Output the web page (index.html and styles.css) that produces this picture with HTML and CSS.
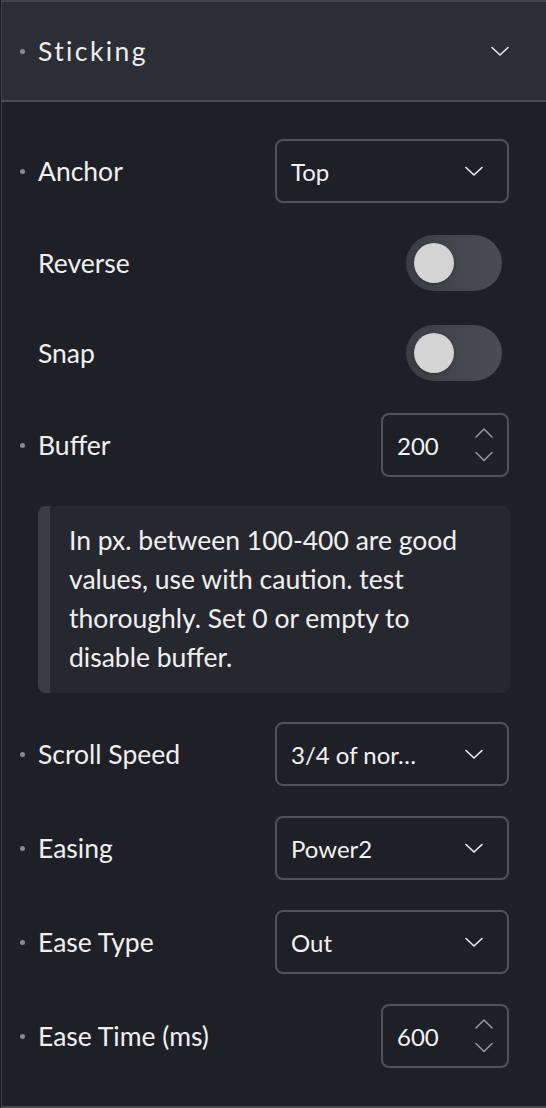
FILE: index.html
```html
<!DOCTYPE html>
<html>
<head>
<meta charset="utf-8">
<link rel="stylesheet" href="styles.css">
</head>
<body>
<div class="panel">
  <div class="header">
    <div class="label-wrap">
      <span class="dot"></span>
      <span class="title">Sticking</span>
    </div>
    <svg class="head-chev" width="18" height="12" viewBox="0 0 18 12"><path d="M1 2.5 L9 10 L17 2.5" fill="none" stroke="#e6e6e6" stroke-width="1.6" stroke-linecap="round" stroke-linejoin="round"/></svg>
  </div>
  <div class="body">
    <div class="row">
      <div class="label-wrap"><span class="dot"></span><span class="label">Anchor</span></div>
      <div class="select"><span class="sel-text">Top</span><svg class="chev" width="18" height="12" viewBox="0 0 18 12"><path d="M1 2.5 L9 10 L17 2.5" fill="none" stroke="#f0f0f0" stroke-width="1.6" stroke-linecap="round" stroke-linejoin="round"/></svg></div>
    </div>
    <div class="row row-toggle">
      <div class="label-wrap"><span class="dot hidden"></span><span class="label">Reverse</span></div>
      <div class="toggle"><span class="knob"></span></div>
    </div>
    <div class="row row-toggle">
      <div class="label-wrap"><span class="dot hidden"></span><span class="label">Snap</span></div>
      <div class="toggle"><span class="knob"></span></div>
    </div>
    <div class="row">
      <div class="label-wrap"><span class="dot"></span><span class="label">Buffer</span></div>
      <div class="number"><span class="num-text">200</span><svg class="spin" width="18" height="36" viewBox="0 0 18 36"><path d="M1 10 L9 2 L17 10" fill="none" stroke="#9a9a9e" stroke-width="1.5" stroke-linecap="round" stroke-linejoin="round"/><path d="M1 25.5 L9 33.5 L17 25.5" fill="none" stroke="#9a9a9e" stroke-width="1.5" stroke-linecap="round" stroke-linejoin="round"/></svg></div>
    </div>
    <div class="note">In px. between 100-400 are good values, use with caution. test thoroughly. Set 0 or empty to disable buffer.</div>
    <div class="row">
      <div class="label-wrap"><span class="dot"></span><span class="label">Scroll Speed</span></div>
      <div class="select"><span class="sel-text">3/4 of nor…</span><svg class="chev" width="18" height="12" viewBox="0 0 18 12"><path d="M1 2.5 L9 10 L17 2.5" fill="none" stroke="#f0f0f0" stroke-width="1.6" stroke-linecap="round" stroke-linejoin="round"/></svg></div>
    </div>
    <div class="row">
      <div class="label-wrap"><span class="dot"></span><span class="label">Easing</span></div>
      <div class="select"><span class="sel-text">Power2</span><svg class="chev" width="18" height="12" viewBox="0 0 18 12"><path d="M1 2.5 L9 10 L17 2.5" fill="none" stroke="#f0f0f0" stroke-width="1.6" stroke-linecap="round" stroke-linejoin="round"/></svg></div>
    </div>
    <div class="row">
      <div class="label-wrap"><span class="dot"></span><span class="label">Ease Type</span></div>
      <div class="select"><span class="sel-text">Out</span><svg class="chev" width="18" height="12" viewBox="0 0 18 12"><path d="M1 2.5 L9 10 L17 2.5" fill="none" stroke="#f0f0f0" stroke-width="1.6" stroke-linecap="round" stroke-linejoin="round"/></svg></div>
    </div>
    <div class="row">
      <div class="label-wrap"><span class="dot"></span><span class="label">Ease Time (ms)</span></div>
      <div class="number"><span class="num-text">600</span><svg class="spin" width="18" height="36" viewBox="0 0 18 36"><path d="M1 10 L9 2 L17 10" fill="none" stroke="#9a9a9e" stroke-width="1.5" stroke-linecap="round" stroke-linejoin="round"/><path d="M1 25.5 L9 33.5 L17 25.5" fill="none" stroke="#9a9a9e" stroke-width="1.5" stroke-linecap="round" stroke-linejoin="round"/></svg></div>
    </div>
  </div>
</div>
</body>
</html>
```
FILE: styles.css
```css
html, body {
  margin: 0;
  padding: 0;
  background: #18191e;
}
body {
  font-family: "Lato", "Noto Sans", sans-serif;
  color: #f2f2f2;
}
.panel {
  margin-left: 1px;
  width: 545px;
  height: 1108px;
  box-sizing: border-box;
  border-left: 1px solid #44464d;
  border-top: 2px solid #44464d;
  border-bottom: 2px solid #44464d;
  background: #1f2027;
}
.header {
  height: 98px;
  background: #2c2e36;
  border-bottom: 2px solid #4a4c54;
  display: flex;
  align-items: center;
  justify-content: space-between;
  padding: 0 37px 0 18px;
}
.label-wrap {
  display: flex;
  align-items: center;
}
.dot {
  width: 5px;
  height: 5px;
  border-radius: 50%;
  background: #8a8b90;
  margin-right: 13px;
  flex: none;
}
.dot.hidden {
  visibility: hidden;
}
.title {
  font-size: 26.5px;
  letter-spacing: 2.4px;
  color: #ededed;
}
.body {
  padding: 37px 37px 0 18px;
  display: flex;
  flex-direction: column;
  gap: 30px;
}
.row {
  display: flex;
  align-items: center;
  justify-content: space-between;
  height: 64px;
}
.row-toggle {
  height: 60px;
  padding-right: 7px;
}
.label {
  font-size: 26.5px;
  color: #f0f0f0;
}
.select {
  width: 234px;
  height: 64px;
  box-sizing: border-box;
  border: 2px solid #505258;
  border-radius: 8px;
  display: flex;
  align-items: center;
  justify-content: space-between;
  padding: 0 24px 0 14px;
}
.sel-text {
  font-size: 24px;
  color: #f2f2f2;
  white-space: nowrap;
}
.number {
  width: 128px;
  height: 64px;
  box-sizing: border-box;
  border: 2px solid #505258;
  border-radius: 8px;
  display: flex;
  align-items: center;
  justify-content: space-between;
  padding: 0 14px 0 14px;
}
.num-text {
  font-size: 24px;
}
.toggle {
  width: 96px;
  height: 56px;
  border-radius: 28px;
  background: linear-gradient(90deg, #3b3d44 0%, #43454c 45%, #4a4c54 100%);
  display: flex;
  align-items: center;
  padding-left: 8px;
  box-sizing: border-box;
}
.knob {
  width: 40px;
  height: 40px;
  border-radius: 50%;
  background: #d4d4d4;
  box-shadow: 0 1px 3px rgba(0,0,0,0.3);
}
.note {
  margin: -1px -1px -1px 18px;
  background: #27282f;
  border-left: 12px solid #3b3d44;
  border-radius: 8px;
  padding: 15px 20px 16px 19px;
  font-size: 26.5px;
  line-height: 39px;
  color: #f0f0f0;
}
```
